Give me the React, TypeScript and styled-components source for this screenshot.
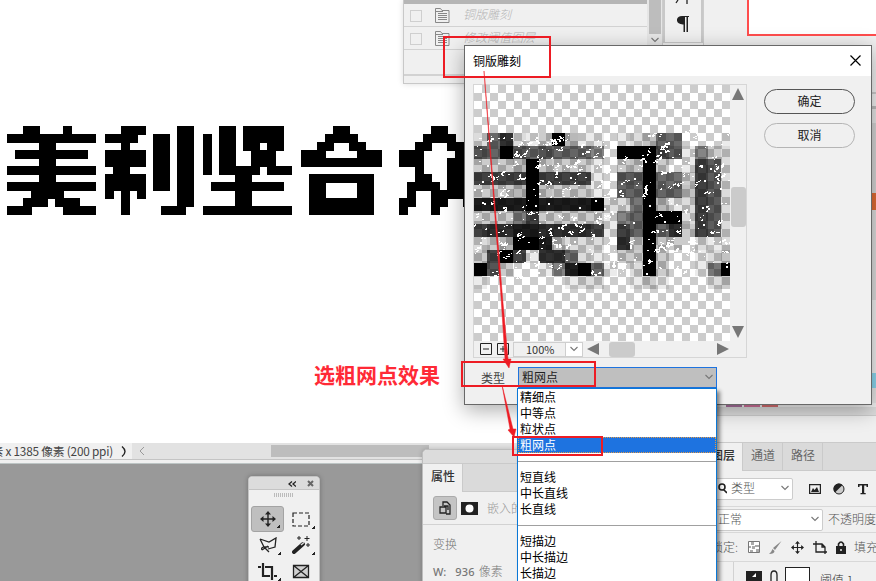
import React from "react";
import styled, { createGlobalStyle, css } from "styled-components";

const Global = createGlobalStyle`
  * { box-sizing: border-box; }
  body { margin: 0; background: #fff; }
  svg { display: block; flex: none; }
`;

const Desktop = styled.main`
  position: relative;
  width: 876px;
  height: 581px;
  overflow: hidden;
  background: #fff;
  color: #333;
  font: 12px/16px "Noto Sans CJK SC", sans-serif;
  white-space: nowrap;
`;

/* A window floating on the desktop */
const Floating = styled.section<{ $x: number; $y: number; $w: number; $h: number }>`
  position: absolute;
  left: ${(p) => p.$x}px;
  top: ${(p) => p.$y}px;
  width: ${(p) => p.$w}px;
  height: ${(p) => p.$h}px;
`;

/* ---------- document ---------- */

const DocumentArea = styled.div`
  height: 443px;
  padding-top: 110px;
`;

const StatusBar = styled.div`
  display: flex;
  align-items: center;
  height: 16px;
  background: #e2e2e2;
`;

const DocInfo = styled.div`
  display: flex;
  align-items: center;
  width: 132px;
  height: 16px;
  overflow: hidden;
  background: #f0f0f0;
  justify-content: flex-end;
  padding-right: 5px;
  gap: 8px;
  font-size: 11.8px;
  letter-spacing: -0.22px;
  color: #444;
`;

const StatusChevron = styled.svg`
  width: 18px;
  height: 10px;
`;

const ScrollThumb = styled.div`
  width: 158px;
  height: 12px;
  margin-left: 121px;
  background: #bdbdbd;
`;

const Workspace = styled.div`
  height: 122px;
  background: #999;
  border-top: 1px solid #c4c4c4;
  box-shadow: inset 0 3px #f0f0f0, inset 0 4px #bcc4c4;
`;

/* ---------- history panel ---------- */

const HistoryPanel = styled(Floating)`
  display: grid;
  grid-template-columns: 243px 15px;
  border: 1px solid #c8c8c8;
  border-top: 0;
  background: #f0f0f0;
  box-shadow: 0 0 6px #0002;
`;

const HistoryList = styled.div`
  padding-top: 4px;
  box-shadow: inset 0 4px #b5b5b5;
`;

const HistoryRow = styled.div`
  display: flex;
  align-items: center;
  height: 23px;
  padding: 1px 0 0 6px;
  border-bottom: 1px solid #d2d2d2;
  color: #b4b4b4;
  font-style: italic;
  font-weight: 300;
  gap: 13px;
`;

const HistoryName = styled.span`
  margin-top: -4px;
`;

const EmptyCheck = styled.i`
  width: 12px;
  height: 12px;
  border: 1px solid #cfcfcf;
`;

const HistoryFoot = styled.div`
  height: 26px;
  border-bottom: 2px solid #d2d2d2;
`;

const HistoryScroll = styled.div`
  display: flex;
  flex-direction: column;
  align-items: center;
  gap: 3px;
  background: #e6e6e6;
`;

const HistoryThumb = styled.div`
  width: 12px;
  height: 34px;
  background: #bdbdbd;
`;

const IconColumn = styled(Floating)`
  display: flex;
  flex-direction: column;
  align-items: center;
  gap: 12px;
  background: #f0f0f0;
  border: 1px solid #c8c8c8;
  border-width: 0 2px 1px;
`;

const SidePanel = styled(Floating)`
  background: #f0f0f0;
  border-left: 1px solid #ccc;
`;

const RedFrame = styled(Floating)`
  background: #fff;
  border: solid #ff4d4d;
  border-width: 0 0 2px 2px;
`;

const Stripe = styled.div<{ $h: number; $c: string; $w?: number }>`
  height: ${(p) => p.$h}px;
  width: ${(p) => (p.$w ? `${p.$w}px` : "auto")};
  background: ${(p) => p.$c};
`;

const SwatchRow = styled.div`
  display: flex;
  gap: 2px;
  padding-left: 22px;
`;

/* ---------- tool panel ---------- */

const ToolPanel = styled(Floating)`
  background: #f0f0f0;
  border: 1px solid #c4c4c4;
  border-radius: 4px 4px 0 0;
  box-shadow: 0 0 5px #0004;
`;

const ToolHead = styled.div`
  display: flex;
  align-items: center;
  justify-content: flex-end;
  gap: 11px;
  height: 13px;
  padding: 1px 5px 0 0;
  border-bottom: 1px solid #c4c4c4;
  background: #dcdcdc;
  border-radius: 4px 4px 0 0;
`;

const Grip = styled.div`
  width: 20px;
  height: 4px;
  margin: 3px auto 9px 25px;
  background: repeating-linear-gradient(90deg, #bbb 0 1px, transparent 1px 2px);
`;

const ToolGrid = styled.div`
  display: grid;
  grid-template-columns: 33px 34px;
  grid-auto-rows: 26px;
  padding-left: 2px;
`;

const Tool = styled.div<{ $on?: boolean }>`
  position: relative;
  display: flex;
  align-items: center;
  justify-content: center;
  border-radius: 3px;
  ${(p) =>
    p.$on &&
    css`
      background: #bfbfbf;
      border: 1px solid #a3a3a3;
    `}
`;

const Corner = styled.i`
  position: absolute;
  right: 3px;
  bottom: 3px;
  width: 3px;
  height: 3px;
  background: linear-gradient(135deg, transparent 45%, #222 50%);
`;

/* ---------- properties and layers ---------- */

const PropertiesPanel = styled(Floating)`
  background: #f0f0f0;
  border: 1px solid #bdbdbd;
  border-radius: 5px 0 0 0;
  box-shadow: 0 0 5px #0003;
  overflow: hidden;
`;

const TabStrip = styled.div<{ $h: number }>`
  display: flex;
  height: ${(p) => p.$h}px;
  background: #dadada;
  border: solid #cacaca;
  border-width: 1px 0;
`;

const Tab = styled.div<{ $on?: boolean; $w: number; $clip?: boolean }>`
  display: flex;
  align-items: center;
  justify-content: ${(p) => (p.$clip ? "flex-end" : "center")};
  width: ${(p) => p.$w}px;
  padding: 0 ${(p) => (p.$clip ? 7 : 0)}px 4px 1px;
  border-right: 1px solid #cacaca;
  color: ${(p) => (p.$on ? "#333" : "#666")};
  font-weight: ${(p) => (p.$on ? 500 : 400)};
  background: ${(p) => (p.$on ? "#f0f0f0" : "transparent")};
  margin-bottom: ${(p) => (p.$on ? "-1px" : 0)};
`;

const PropRow = styled.div`
  display: flex;
  align-items: center;
  height: 33px;
  padding-left: 10px;
  border-bottom: 1px solid #d2d2d2;
  color: #999;
  gap: 4px;
`;

const PropLabel = styled.div<{ $top: number }>`
  padding: ${(p) => p.$top}px 0 0 10px;
  color: #777;
  font-weight: 300;
`;

const LightText = styled.span<{ $gap?: number }>`
  margin: -1px 0 0 ${(p) => p.$gap ?? 5}px;
  font-weight: 300;
`;

const PropKey = styled.b`
  font: 500 11px "Noto Sans", sans-serif;
  margin-right: 9px;
  color: #777;
`;

const PropValue = styled(PropKey)`
  margin-right: 4px;
  letter-spacing: 0.2px;
`;

const PropIcon = styled.div`
  display: grid;
  place-items: center;
  width: 24px;
  height: 24px;
  border: 1px solid #aaa;
  border-radius: 3px;
  background: #c4c4c4;
`;

const LayersPanel = styled(Floating)`
  background: #f0f0f0;
  overflow: hidden;
`;

const LayerRow = styled.div<{ $h: number }>`
  display: flex;
  align-items: center;
  height: ${(p) => p.$h}px;
  border-bottom: 1px solid #d8d8d8;
  color: #555;
  font-weight: 300;
`;

const LockLabel = styled.span`
  margin-left: -3px;
`;

const Field = styled.div<{ $w: number; $pad?: number }>`
  display: flex;
  align-items: center;
  gap: 4px;
  width: ${(p) => p.$w}px;
  height: 22px;
  padding: 0 3px 1px ${(p) => p.$pad ?? 0}px;
  border: 1px solid #ccc;
  border-radius: 2px;
  background: #fff;
`;

const Push = styled.span`
  flex: 1;
`;

const FilterIcons = styled.div`
  display: flex;
  align-items: center;
  gap: 12px;
  padding-left: 16px;
`;

const LockIcons = styled.div`
  display: flex;
  align-items: center;
  gap: 9px;
  padding: 0 8px 0 10px;
`;

const LayerThumbRow = styled.div`
  display: flex;
  align-items: flex-start;
  height: 32px;
  margin-left: 19px;
  padding: 5px 0 0 12px;
  border-left: 1px solid #d2d2d2;
  gap: 6px;
  font-weight: 300;
`;

const LayerName = styled.span`
  margin-top: 5px;
`;

const MaskThumb = styled.i`
  width: 25px;
  height: 25px;
  border: 1px solid #222;
  background: #fff;
  margin-right: 4px;
`;

/* ---------- dialog ---------- */

const Dialog = styled(Floating)`
  border: 1px solid #686868;
  background: #f0f0f0;
  box-shadow: 0 5px 20px #0005;
`;

const TitleBar = styled.header`
  display: flex;
  align-items: center;
  justify-content: space-between;
  height: 30px;
  padding: 0 10px 1px 8px;
  background: #fff;
  color: #000;
`;

const DialogBody = styled.div`
  display: flex;
  gap: 17px;
  padding: 8px 0 0 8px;
`;

const PreviewFrame = styled.div`
  display: grid;
  grid-template: 256px 16px / 256px 16px;
  width: 274px;
  height: 274px;
  border: 1px solid #d6d6d6;
`;

const PreviewCanvas = styled.div`
  background: repeating-conic-gradient(#fff 0 25%, #ccc 0 50%) 8px 0 / 16px 16px;
  overflow: hidden;
`;

const VScroll = styled.div`
  display: flex;
  flex-direction: column;
  align-items: center;
  padding-top: 3px;
`;

const VThumb = styled.div`
  width: 15px;
  height: 40px;
  margin: 87px 0 99px;
  border-radius: 3px;
  background: #cbcbcb;
`;

const ZoomBar = styled.div`
  display: flex;
  align-items: center;
  height: 16px;
  padding-left: 6px;
`;

const ZoomButtons = styled.div`
  display: flex;
  gap: 5px;
`;

const ZoomField = styled.div`
  display: flex;
  align-items: center;
  width: 70px;
  height: 15px;
  margin: 0 4px;
  border: 1px solid #cfcfcf;
  font-size: 11px;
  line-height: 11px;
  padding-left: 12px;
`;

const ZoomChevron = styled.span`
  display: grid;
  place-items: center;
  width: 17px;
  height: 13px;
  margin-left: auto;
  background: #fff;
  border-left: 1px solid #cfcfcf;
`;

const HThumb = styled.div`
  width: 26px;
  height: 15px;
  margin: 0 82px 0 10px;
  border-radius: 3px;
  background: #cbcbcb;
`;

const Buttons = styled.div`
  display: flex;
  flex-direction: column;
  gap: 9px;
  padding-top: 5px;
`;

const Button = styled.button<{ $primary?: boolean }>`
  width: 91px;
  height: 25px;
  padding: 0 0 1px;
  border: 1px solid ${(p) => (p.$primary ? "#555" : "#b5b5b5")};
  border-radius: 13px;
  background: transparent;
  color: #222;
  font: 12px/16px "Noto Sans CJK SC", sans-serif;
`;

const TypeRow = styled.div`
  display: flex;
  align-items: center;
  padding: 9px 0 0 16px;
  gap: 13px;
  color: #444;
`;

const Select = styled.div`
  display: flex;
  align-items: center;
  justify-content: space-between;
  width: 199px;
  height: 21px;
  padding: 0 3px 2px;
  border: 1px solid #1e73df;
  background: #bfbfbf;
  color: #222;
`;

const Menu = styled(Floating)`
  border: solid #0a78d7;
  border-width: 1px 1px 0;
  background: #fff;
  color: #000;
  box-shadow: 3px 3px 4px #0007;
`;

const MenuItem = styled.div<{ $on?: boolean }>`
  height: 16px;
  padding-left: 2px;
  line-height: 15px;
  ${(p) =>
    p.$on &&
    css`
      color: #fff;
      background: #1e73e0;
      outline: 1px dotted #e09a4a;
      outline-offset: -1px;
    `}
`;

const Divider = styled.hr`
  height: 1px;
  margin: 8px 0 7px;
  border: 0;
  background: #a0a0a0;
`;

/* ---------- annotations ---------- */

const MarkBox = styled(Floating)`
  border: 2px solid #ed1c24;
`;

const Note = styled(Floating)`
  color: #ff2a36;
  font-weight: 700;
  font-size: 21px;
  line-height: 24px;
`;

const Overlay = styled.svg`
  position: absolute;
  left: 0;
  top: 0;
  pointer-events: none;
`;

/* ---------- artwork ---------- */

/* Samples the middle of each cell and spreads it across the whole cell. */
const Mosaic = ({ id, cell, w, h, blur, table }: { id: string; cell: number; w: number; h: number; blur?: number; table: string }) => (
  <filter id={id} filterUnits="userSpaceOnUse" primitiveUnits="userSpaceOnUse" x="0" y="0" width={w} height={h} colorInterpolationFilters="sRGB">
    <feOffset in="SourceGraphic" result="soft" />
    {blur ? <feGaussianBlur in="SourceGraphic" stdDeviation={blur} result="soft" /> : null}
    <feFlood x={cell >> 1} y={cell >> 1} width="1" height="1" floodColor="#000" result="point" />
    <feOffset in="point" x="0" y="0" width={cell} height={cell} result="tile" />
    <feTile in="tile" x="0" y="0" width={w} height={h} result="grid" />
    <feComposite in="soft" in2="grid" operator="in" />
    <feMorphology operator="dilate" radius={cell >> 1} />
    <feComponentTransfer>
      <feFuncA type="discrete" tableValues={table} />
    </feComponentTransfer>
  </filter>
);

/* Placement of each character inside its 88px square */
const letters = [
  { c: "美", weight: 700, sx: 104, sy: 104, dx: -9, dy: -9 },
  { c: "利", weight: 900, sx: 100, sy: 98, dx: -9, dy: -4 },
  { c: "坚", weight: 700, sx: 102, sy: 94, dx: -9, dy: -2 },
  { c: "合", weight: 700, sx: 88, sy: 102, dx: -4, dy: -7 },
  { c: "众", weight: 700, sx: 96, sy: 98, dx: -7, dy: -7 },
];

const Letter = ({ l, k = 1 }: { l: (typeof letters)[number]; k?: number }) => (
  <text
    transform={`translate(${l.dx * k} ${(l.dy + 0.88 * l.sy) * k}) scale(${(l.sx * k) / 100} ${(l.sy * k) / 100})`}
    fontSize="100"
    fontWeight={l.weight}
    fontFamily="Noto Sans CJK SC"
  >
    {l.c}
  </text>
);

const Artwork = () => (
  <svg width="500" height="120" viewBox="0 0 500 120">
    <defs>
      <Mosaic id="canvasMosaic" cell={8} w={96} h={96} table="0 0 1 1 1" />
    </defs>
    {letters.map((l, i) => (
      <g key={l.c} transform={`translate(${7 + i * 98} 16)`}>
        <g filter="url(#canvasMosaic)"><Letter l={l} /></g>
      </g>
    ))}
  </svg>
);

const random = (seed: number) => () => (seed = (seed * 16807) % 2147483647) / 2147483647;

const specks = (() => {
  const rnd = random(41);
  let d = "";
  for (let i = 0; i < 400; i++) {
    let x = Math.floor(rnd() * 256);
    let y = Math.floor(48 + rnd() * 144);
    const n = rnd() < 0.3 ? 7 : 1;
    for (let k = 0; k < n; k++) {
      d += `M${x} ${y}h${1 + Math.floor(rnd() * 2)}v${1 + Math.floor(rnd() * 1.4)}h-2z`;
      x += Math.floor(rnd() * 4) - 1;
      y += Math.floor(rnd() * 4) - 2;
    }
  }
  return d;
})();

/* Ink strength (0-9) of the cells of each previewed character */
const tones = [
  ["00470009000", "05495454443", "00000900000", "06666966660", "00001920000", "08888988889", "00003620000", "06778877776", "00029984000", "00696077400", "09500003894"],
  ["00044000030", "99965030040", "00900065040", "55944065040", "44944065040", "03900065040", "34999065040", "64947665040", "70900040040", "00900000040", "00900003990"],
];

const PreviewArt = () => (
  <svg width="256" height="256" viewBox="0 0 256 256" shapeRendering="crispEdges">
    <defs>
      <Mosaic id="previewMosaic" cell={13} w={156} h={156} table="0 0 1 1 1" />
      <Mosaic id="previewHalo" cell={13} w={169} h={169} blur={6} table="0 .08 .14 .2 .24 .28 .3 .32" />
      {tones.map((rows, i) => (
        <mask key={i} id={`tone${i}`} maskUnits="userSpaceOnUse" x="0" y="0" width="156" height="156">
          {rows.flatMap((row, r) =>
            [...row].map((v, c) => (
              <rect key={`${r}-${c}`} x={c * 13} y={r * 13} width="13" height="13" fill="#fff" fillOpacity={v === "9" ? 1 : Number(v) * 0.105} />
            )),
          )}
        </mask>
      ))}
    </defs>
    {letters.slice(0, 2).map((l, i) => (
      <g key={l.c} transform={`translate(${i * 156 - 13} 48)`}>
        <g filter="url(#previewHalo)" aria-hidden="true"><Letter l={l} k={13 / 8} /></g>
        <g mask={`url(#tone${i})`}>
          <g filter="url(#previewMosaic)"><Letter l={l} k={13 / 8} /></g>
        </g>
      </g>
    ))}
    <path d={specks} fill="#fff" />
  </svg>
);

/* ---------- icons ---------- */

const Glyph = ({ d, w = 16, h = 16, s = 1.3, c = "#222", f = "none" }: { d: string; w?: number; h?: number; s?: number; c?: string; f?: string }) => (
  <svg width={w} height={h} viewBox={`0 0 ${w} ${h}`}>
    <path d={d} fill={f} stroke={c} strokeWidth={s} />
  </svg>
);

const Chevron = () => <Glyph w={8} h={6} s={1.1} c="#777" d="M.5 1 4 4.5 7.5 1" />;

const DocIcon = () => (
  <svg width="15" height="15" viewBox="0 0 15 15">
    <path d="M.5 14.500V.5h5l1.500 2h7v12zM1 3.500h7M3 5.500h9M3 7.500h9M3 9.500h9M3 11.500h9" fill="none" stroke="#888" />
  </svg>
);

const MoveIcon = ({ size = 16 }: { size?: number }) => (
  <svg width={size} height={size} viewBox="0 0 16 16">
    <path d="M8 2v12M2 8h12" stroke="#222" strokeWidth="1.4" />
    <path d="m8 0 3 3.500H5zM8 16l3-3.500H5zM0 8l3.500-3v6zM16 8l-3.500-3v6z" fill="#222" />
  </svg>
);

const arrows = { u: "M6 0 12 12H0z", d: "M6 12 12 0H0z", l: "M0 6 12 0v12z", r: "M12 6 0 0v12z" };

const Arrow = ({ dir }: { dir: keyof typeof arrows }) => (
  <svg width="12" height="12" viewBox="0 0 12 12"><path d={arrows[dir]} fill="#777" /></svg>
);

export default function App() {
  return (
    <Desktop>
      <Global />
      <DocumentArea><Artwork /></DocumentArea>
      <StatusBar>
        <DocInfo><span>像素 x 1385 像素 (200 ppi)</span><Glyph w={6} h={11} s={1.4} d="M1 .5q6 5 0 10" /></DocInfo>
        <StatusChevron viewBox="0 0 18 10"><path d="M12 1 8 5l4 4" fill="none" stroke="#999" /></StatusChevron>
        <ScrollThumb />
      </StatusBar>
      <Workspace />

      <HistoryPanel $x={403} $y={0} $w={260} $h={84}>
        <HistoryList>
          <HistoryRow><EmptyCheck /><DocIcon /><HistoryName>铜版雕刻</HistoryName></HistoryRow>
          <HistoryRow><EmptyCheck /><DocIcon /><HistoryName>修改阈值图层</HistoryName></HistoryRow>
          <HistoryFoot />
        </HistoryList>
        <HistoryScroll><HistoryThumb /><Chevron /></HistoryScroll>
      </HistoryPanel>
      <SidePanel $x={662} $y={0} $w={85} $h={90} />
      <IconColumn $x={663} $y={0} $w={40} $h={43}>
        <Glyph w={16} h={4} d="M1 3 3 0M12 0v4" />
        <svg width="12" height="16" viewBox="0 0 12 16"><path d="M5 0h7v1h-1v15h-1.500V1H8v15H6.500V8.500C-2 9-2 0 5 0z" fill="#222" /></svg>
      </IconColumn>
      <SidePanel $x={703} $y={0} $w={173} $h={450}>
        <Stripe $h={92} $c="#f0f0f0" /><Stripe $h={2} $c="#ccc" />
        <Stripe $h={12} $c="#f0f0f0" /><Stripe $h={3} $c="#bbb" />
        <Stripe $h={14} $c="#e5e5e5" /><Stripe $h={70} $c="#d4d4d4" />
        <Stripe $h={17} $c="#e06b35" /><Stripe $h={90} $c="#dcdcdc" />
        <Stripe $h={73} $c="#eee" /><Stripe $h={15} $c="#8bd6ee" /><Stripe $h={15} $c="#e4e4e4" />
        <SwatchRow><Stripe $h={4} $w={16} $c="#a8709d" /><Stripe $h={4} $w={16} $c="#cf7199" /><Stripe $h={4} $w={16} $c="#d66d70" /></SwatchRow>
        <Stripe $h={8} $c="#ddd" /><Stripe $h={1} $c="#ccc" />
      </SidePanel>
      <RedFrame $x={747} $y={0} $w={129} $h={36} />

      <ToolPanel $x={248} $y={476} $w={72} $h={120}>
        <ToolHead><Glyph w={8} h={6} d="M4 .5 1 3l3 2.500M8 .5 5 3l3 2.500" /><Glyph w={7} h={7} s={2} c="#666" d="m1 1 5 5m0-5L1 6" /></ToolHead>
        <Grip />
        <ToolGrid>
          <Tool $on><MoveIcon /><Corner /></Tool>
          <Tool><svg width="18" height="15" viewBox="0 0 18 15"><rect x="1" y="1" width="16" height="13" fill="none" stroke="#222" strokeWidth="1.2" strokeDasharray="4 2" /></svg><Corner /></Tool>
          <Tool><Glyph w={18} h={16} d="M1 2 10 5l7-4-1 9-7 2M1 2l4 8M5 10l5 5M3 13c-2-4 5-3 7-3M3 13l6-4" /><Corner /></Tool>
          <Tool><svg width="18" height="18" viewBox="0 0 18 18"><path d="m2 16 9-8" stroke="#222" strokeWidth="4" strokeLinecap="round" /><path d="m9 9 3-2.500" stroke="#ddd" strokeWidth="1.500" /><path d="M7 0v4M5 2h4M15 0v5M12.500 2.500h5M16 7v4M14 9h4" stroke="#222" /></svg><Corner /></Tool>
          <Tool><Glyph w={19} h={17} s={2.2} d="M0 4h3m2-4v13h7M7 4h7v13M16 13h3" /><Corner /></Tool>
          <Tool><Glyph w={18} h={15} f="#d0d0d0" d="M1.500 1.500h15v12h-15zl15 12m0-12-15 12" /></Tool>
        </ToolGrid>
      </ToolPanel>

      <PropertiesPanel $x={422} $y={449} $w={300} $h={140}>
        <Stripe $h={13} $c="#dcdcdc" />
        <TabStrip $h={29}><Tab $on $w={40}>属性</Tab></TabStrip>
        <PropRow>
          <PropIcon><Glyph w={12} h={14} d="M4 5V1h4l3 3v9H7M1 6h6v6H1zM5 5h4v4" /></PropIcon>
          <svg width="17" height="13" viewBox="0 0 17 13"><path d="M0 0h17v13H0z" fill="#222" /><circle cx="8.500" cy="6.500" r="4" fill="#fff" /></svg>
          <LightText>嵌入的</LightText>
        </PropRow>
        <PropLabel $top={11}>变换</PropLabel>
        <PropLabel $top={11}><PropKey>W:</PropKey><PropValue>936</PropValue>像素</PropLabel>
      </PropertiesPanel>

      <LayersPanel $x={714} $y={442} $w={162} $h={139}>
        <TabStrip $h={29}><Tab $on $clip $w={29}>图层</Tab><Tab $w={40}>通道</Tab><Tab $w={40}>路径</Tab></TabStrip>
        <LayerRow $h={36}>
          <Field $w={79} $pad={2}><Glyph w={10} h={12} s={1.6} d="M8 5a3 3 0 1 1-6 0a3 3 0 1 1 6 0M7 8l3 3" />类型<Push /><Chevron /></Field>
          <FilterIcons>
            <svg width="12" height="10" viewBox="0 0 12 10"><path d="M.6.6h10.800v8.800H.6z" fill="none" stroke="#222" strokeWidth="1.200" /><path d="m2 8 2-4 1.500 2L8 3l2 5z" fill="#222" /></svg>
            <svg width="12" height="12" viewBox="0 0 12 12"><circle cx="6" cy="6" r="5" fill="#ccc" stroke="#222" /><path d="M2 9.500A5 5 0 0 1 9.500 2z" fill="#222" /></svg>
            <svg width="12" height="12" viewBox="0 0 12 12"><path d="M1 1h10v3H9.500V2.500H7.200V10h1.500v1.200H3.500V10H5V2.500H2.500V4H1z" fill="#222" /></svg>
          </FilterIcons>
        </LayerRow>
        <LayerRow $h={26}><Field $w={111}><LightText $gap={3}>正常</LightText><Push /><Chevron /></Field><LightText $gap={5}>不透明度</LightText></LayerRow>
        <LayerRow $h={29}>
          <LockLabel>锁定:</LockLabel>
          <LockIcons>
            <svg width="12" height="12" viewBox="0 0 12 12"><path d="M.5.5h11v11H.5z" fill="#fff" stroke="#777" /><path d="M3 1h3v3H3zm4 3h4v2H7zM1 5h2v2H1zm3 0h3v3H4zM8 8h3v3H8zM2 9h3v2H2z" fill="#aaa" /></svg>
            <svg width="13" height="13" viewBox="0 0 13 13"><path d="M12.500 0 6 9 4 7zM3.500 8l2 2q0 3-5.500 3 2-1 3.500-5z" fill="#888" /></svg>
            <MoveIcon size={13} />
            <Glyph w={14} h={13} d="M0 3h9l3 3v7M3 0v11h11M9 3v3h3" />
            <svg width="10" height="13" viewBox="0 0 10 13"><path d="M2.500 6V3q2.500-4 5 0v3" fill="none" stroke="#222" strokeWidth="1.600" /><path d="M0 5h10v8H0z" fill="#222" /><circle cx="5" cy="9" r="1" fill="#eee" /></svg>
          </LockIcons>
          填充
        </LayerRow>
        <LayerThumbRow>
          <svg width="17" height="26" viewBox="0 0 17 26"><path d="M0 4h16v15H0z" fill="#222" /><path d="M6 10 10 6v4z" fill="#fff" /></svg>
          <Glyph w={10} h={14} d="M2 14V8q0-4 3-4t3 4v6" />
          <MaskThumb /><LayerName>阈值 1</LayerName>
        </LayerThumbRow>
      </LayersPanel>

      <Dialog $x={464} $y={45} $w={408} $h={360}>
        <TitleBar>铜版雕刻<Glyph w={11} h={11} s={1.2} c="#000" d="m.5.5 10 10m0-10-10 10" /></TitleBar>
        <DialogBody>
          <PreviewFrame>
            <PreviewCanvas><PreviewArt /></PreviewCanvas>
            <VScroll><Arrow dir="u" /><VThumb /><Arrow dir="d" /></VScroll>
            <ZoomBar>
              <ZoomButtons>
                <Glyph w={12} h={12} s={1} d="M.5.5h11v11H.5zM3 6h6" />
                <Glyph w={12} h={12} s={1} d="M.5.5h11v11H.5zM3 6h6M6 3v6" />
              </ZoomButtons>
              <ZoomField>100%<ZoomChevron><Chevron /></ZoomChevron></ZoomField>
              <Arrow dir="l" /><HThumb /><Arrow dir="r" />
            </ZoomBar>
          </PreviewFrame>
          <Buttons><Button $primary>确定</Button><Button>取消</Button></Buttons>
        </DialogBody>
        <TypeRow>类型<Select>粗网点<Chevron /></Select></TypeRow>
      </Dialog>

      <Menu $x={517} $y={388} $w={200} $h={200}>
        <MenuItem>精细点</MenuItem><MenuItem>中等点</MenuItem><MenuItem>粒状点</MenuItem><MenuItem $on>粗网点</MenuItem>
        <Divider />
        <MenuItem>短直线</MenuItem><MenuItem>中长直线</MenuItem><MenuItem>长直线</MenuItem>
        <Divider />
        <MenuItem>短描边</MenuItem><MenuItem>中长描边</MenuItem><MenuItem>长描边</MenuItem>
      </Menu>

      <Note $x={314} $y={362} $w={130} $h={24}>选粗网点效果</Note>
      <MarkBox $x={443} $y={36} $w={108} $h={42} />
      <MarkBox $x={461} $y={361} $w={135} $h={26} />
      <MarkBox $x={512} $y={436} $w={91} $h={20} />
      <Overlay width="876" height="581">
        <path d="m484 71 18.500 226 5.500 62h3l-2 9-6-9h2l-4-62zM502 385l11 44h3l-2 8-6-7 2-1z" fill="#ed1c24" stroke="#ed1c24" strokeWidth=".5" />
      </Overlay>
    </Desktop>
  );
}
